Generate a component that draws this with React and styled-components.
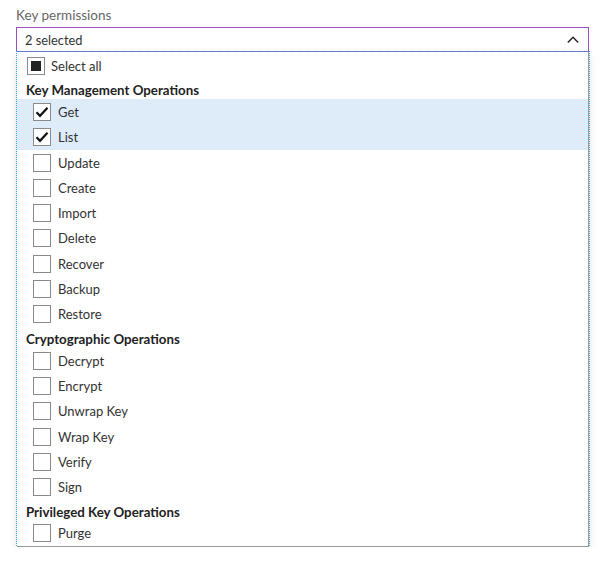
import React from "react";
import styled, { createGlobalStyle } from "styled-components";

const Global = createGlobalStyle`
  html, body { margin: 0; padding: 0; background: #fff; }
  body { font-family: Lato, "Noto Sans", "Liberation Sans", sans-serif; }
`;

const Page = styled.div`
  padding: 6px 0 0 16px;
  width: 573px;
`;

const Label = styled.div`
  font-size: 13.5px;
  line-height: 18px;
  color: #666;
  margin-bottom: 3px;
`;

const Field = styled.div`
  height: 23px;
  border: 1px solid #9b4fc4;
  display: flex;
  align-items: center;
  justify-content: space-between;
  padding: 0 9px 0 8px;
  font-size: 12.8px;
  color: #333;
`;

const Panel = styled.div`
  margin-left: 1px;
  width: 571px;
  border-right: 1px solid #9a9a9a;
  border-bottom: 1px solid #9a9a9a;
  outline: 1px dotted #3aa6df;
  outline-offset: 0;
  box-shadow: 0 4px 8px rgba(0, 0, 0, 0.14);
  padding-top: 1px;
  background: #fff;
`;

const Row = styled.div`
  height: 25.3px;
  display: flex;
  align-items: center;
  padding-left: ${(p) => (p.$top ? 10 : 16)}px;
  background: ${(p) => (p.$on ? "#deecf9" : "transparent")};
  font-size: 13px;
  color: #333;
`;

const Box = styled.span`
  box-sizing: border-box;
  width: 18px;
  height: 18px;
  border: 1px solid #8a8a8a;
  background: #fff;
  display: inline-flex;
  align-items: center;
  justify-content: center;
  margin-right: ${(p) => (p.$top ? 6 : 7)}px;
  flex-shrink: 0;
`;

const Fill = styled.span`
  width: 10px;
  height: 10px;
  background: #222;
`;

const Header = styled.div`
  height: 21px;
  box-sizing: border-box;
  padding-top: 3px;
  display: flex;
  align-items: center;
  padding-left: 9px;
  font-size: 13.3px;
  font-weight: 700;
  color: #222;
`;

const Check = () => (
  <svg width="14" height="12" viewBox="0 0 14 12">
    <path d="M1.5 6.2 L5 9.8 L12.5 1.8" fill="none" stroke="#111" strokeWidth="2.2" />
  </svg>
);

const Chevron = () => (
  <svg width="12" height="7" viewBox="0 0 12 7">
    <path d="M0.8 6.4 L6 1.2 L11.2 6.4" fill="none" stroke="#222" strokeWidth="1.4" />
  </svg>
);

const groups = [
  {
    title: "Key Management Operations",
    items: ["Get", "List", "Update", "Create", "Import", "Delete", "Recover", "Backup", "Restore"],
  },
  {
    title: "Cryptographic Operations",
    items: ["Decrypt", "Encrypt", "Unwrap Key", "Wrap Key", "Verify", "Sign"],
  },
  { title: "Privileged Key Operations", items: ["Purge"] },
];

const selected = new Set(["Get", "List"]);

export default function App() {
  return (
    <>
      <Global />
      <Page>
        <Label>Key permissions</Label>
        <Field>
          <span>2 selected</span>
          <Chevron />
        </Field>
        <Panel>
          <Row $top>
            <Box $top>
              <Fill />
            </Box>
            Select all
          </Row>
          {groups.map((g) => (
            <React.Fragment key={g.title}>
              <Header>{g.title}</Header>
              {g.items.map((it) => (
                <Row key={it} $on={selected.has(it)}>
                  <Box>{selected.has(it) && <Check />}</Box>
                  {it}
                </Row>
              ))}
            </React.Fragment>
          ))}
        </Panel>
      </Page>
    </>
  );
}
